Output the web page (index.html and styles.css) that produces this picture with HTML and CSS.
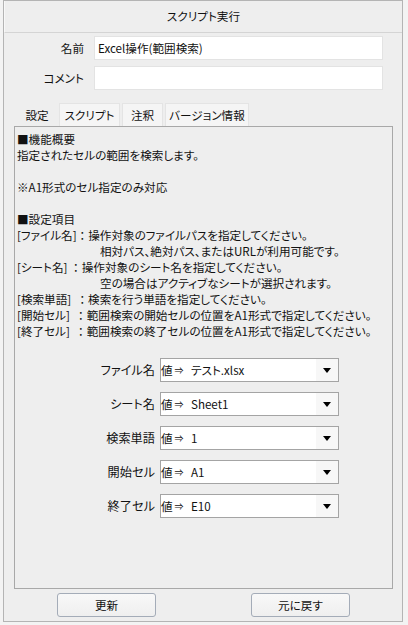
FILE: index.html
```html
<!DOCTYPE html>
<html lang="ja">
<head>
<meta charset="utf-8">
<link rel="stylesheet" href="styles.css">
</head>
<body>
<div class="window">
  <div class="title">スクリプト実行</div>
  <div class="field">
    <label class="field-label">名前</label>
    <div class="textbox">Excel操作(範囲検索)</div>
  </div>
  <div class="field">
    <label class="field-label">コメント</label>
    <div class="textbox"></div>
  </div>
  <div class="tabs">
    <div class="tab tab-active tab-w1">設定</div>
    <div class="tab tab-w2">スクリプト</div>
    <div class="tab tab-w3">注釈</div>
    <div class="tab tab-w4">バージョン情報</div>
  </div>
  <div class="panel">
    <div class="desc">
      <div class="line">■機能概要</div>
      <div class="line">指定されたセルの範囲を検索します。</div>
      <div class="line"> </div>
      <div class="line">※A1形式のセル指定のみ対応</div>
      <div class="line"> </div>
      <div class="line">■設定項目</div>
      <div class="line">[ファイル名]<span class="colon">：</span>操作対象のファイルパスを指定してください。</div>
      <div class="line indent">相対パス、絶対パス、またはURLが利用可能です。</div>
      <div class="line">[シート名] <span class="colon">：</span>操作対象のシート名を指定してください。</div>
      <div class="line indent">空の場合はアクティブなシートが選択されます。</div>
      <div class="line">[検索単語]  <span class="colon">：</span>検索を行う単語を指定してください。</div>
      <div class="line">[開始セル]  <span class="colon">：</span>範囲検索の開始セルの位置をA1形式で指定してください。</div>
      <div class="line">[終了セル]  <span class="colon">：</span>範囲検索の終了セルの位置をA1形式で指定してください。</div>
    </div>
    <div class="params">
      <label class="param-label">ファイル名</label>
      <div class="combo"><span class="kind">値<span class="arrow">⇒</span></span><span class="val">テスト.xlsx</span><span class="drop"><svg width="8" height="5" viewBox="0 0 8 5"><path d="M0 0H8L4 5Z" fill="#000"/></svg></span></div>
      <label class="param-label">シート名</label>
      <div class="combo"><span class="kind">値<span class="arrow">⇒</span></span><span class="val">Sheet1</span><span class="drop"><svg width="8" height="5" viewBox="0 0 8 5"><path d="M0 0H8L4 5Z" fill="#000"/></svg></span></div>
      <label class="param-label">検索単語</label>
      <div class="combo"><span class="kind">値<span class="arrow">⇒</span></span><span class="val">1</span><span class="drop"><svg width="8" height="5" viewBox="0 0 8 5"><path d="M0 0H8L4 5Z" fill="#000"/></svg></span></div>
      <label class="param-label">開始セル</label>
      <div class="combo"><span class="kind">値<span class="arrow">⇒</span></span><span class="val">A1</span><span class="drop"><svg width="8" height="5" viewBox="0 0 8 5"><path d="M0 0H8L4 5Z" fill="#000"/></svg></span></div>
      <label class="param-label">終了セル</label>
      <div class="combo"><span class="kind">値<span class="arrow">⇒</span></span><span class="val">E10</span><span class="drop"><svg width="8" height="5" viewBox="0 0 8 5"><path d="M0 0H8L4 5Z" fill="#000"/></svg></span></div>
    </div>
  </div>
  <div class="buttons">
    <button class="btn">更新</button>
    <button class="btn">元に戻す</button>
  </div>
</div>
</body>
</html>
```

FILE: styles.css
```css
* { box-sizing: border-box; }
html, body {
  margin: 0;
  padding: 0;
  background: #f3f3f3;
}
body {
  font-family: "Noto Sans CJK JP", "Noto Sans", sans-serif;
  font-size: 11.6px;
  font-feature-settings: "palt";
  color: #111;
  width: 408px;
  height: 625px;
  overflow: hidden;
}
.window {
  margin-left: 3px;
  width: 400px;
  height: 622px;
  border: 1px solid #b4b4b4;
  background: #eeeeee;
  display: flex;
  flex-direction: column;
}
.title {
  height: 32px;
  border-left: 1px solid #f8f8f8;
  border-bottom: 1px solid #d4d4d4;
  display: flex;
  align-items: center;
  justify-content: center;
  padding-bottom: 1px;
}
.field {
  display: flex;
  align-items: center;
  height: 24px;
  margin-top: 3px;
}
.field + .field { margin-top: 6px; }
.field-label {
  width: 80px;
  text-align: right;
  margin-right: 10px;
}
.textbox {
  width: 289px;
  height: 24px;
  background: #fff;
  border: 1px solid #e3e3e3;
  padding: 2px 3px;
  line-height: 18px;
}
.tabs {
  display: flex;
  gap: 2px;
  margin-top: 13px;
  margin-left: 13px;
  height: 23px;
}
.tab {
  height: 23px;
  line-height: 22px;
  text-align: center;
  background: #f5f5f5;
  border: 1px solid #e4e4e4;
  border-bottom: none;
}
.tab-active { background: #eeeeee; border-color: #eeeeee; }
.tab-w1 { width: 40px; }
.tab-w2 { width: 61px; }
.tab-w3 { width: 41px; }
.tab-w4 { width: 84px; }
.panel {
  margin-left: 10px;
  width: 379px;
  height: 463px;
  border: 1px solid #a8a8a8;
  padding: 4px 2px 0 2px;
}
.desc .line {
  height: 16px;
  line-height: 16px;
  white-space: pre;
}
.desc .indent { padding-left: 83px; }
.colon { font-feature-settings: normal; }
.params {
  margin-top: 19px;
  display: grid;
  grid-template-columns: 138px 179px;
  column-gap: 5px;
  row-gap: 10px;
  align-items: center;
}
.param-label {
  text-align: right;
  font-size: 12.2px;
}
.combo {
  height: 24px;
  background: #fff;
  border: 1px solid #a4a4a4;
  display: flex;
  align-items: center;
}
.kind {
  width: 30px;
  padding-left: 0;
}
.arrow {
  font-size: 9px;
  margin-left: 2px;
  position: relative;
  top: -1px;
}
.val { flex: 1; }
.drop {
  width: 22px;
  height: 22px;
  background: #f7f7f7;
  display: flex;
  align-items: center;
  justify-content: center;
}
.buttons {
  display: flex;
  margin-top: 4px;
  padding-left: 53px;
  gap: 95px;
}
.btn {
  width: 99px;
  height: 24px;
  font: inherit;
  font-feature-settings: "palt";
  color: #111;
  background: linear-gradient(#f8f8f8, #efefef);
  border: 1px solid #a4acb8;
  border-radius: 3px;
  padding: 0;
}
```
